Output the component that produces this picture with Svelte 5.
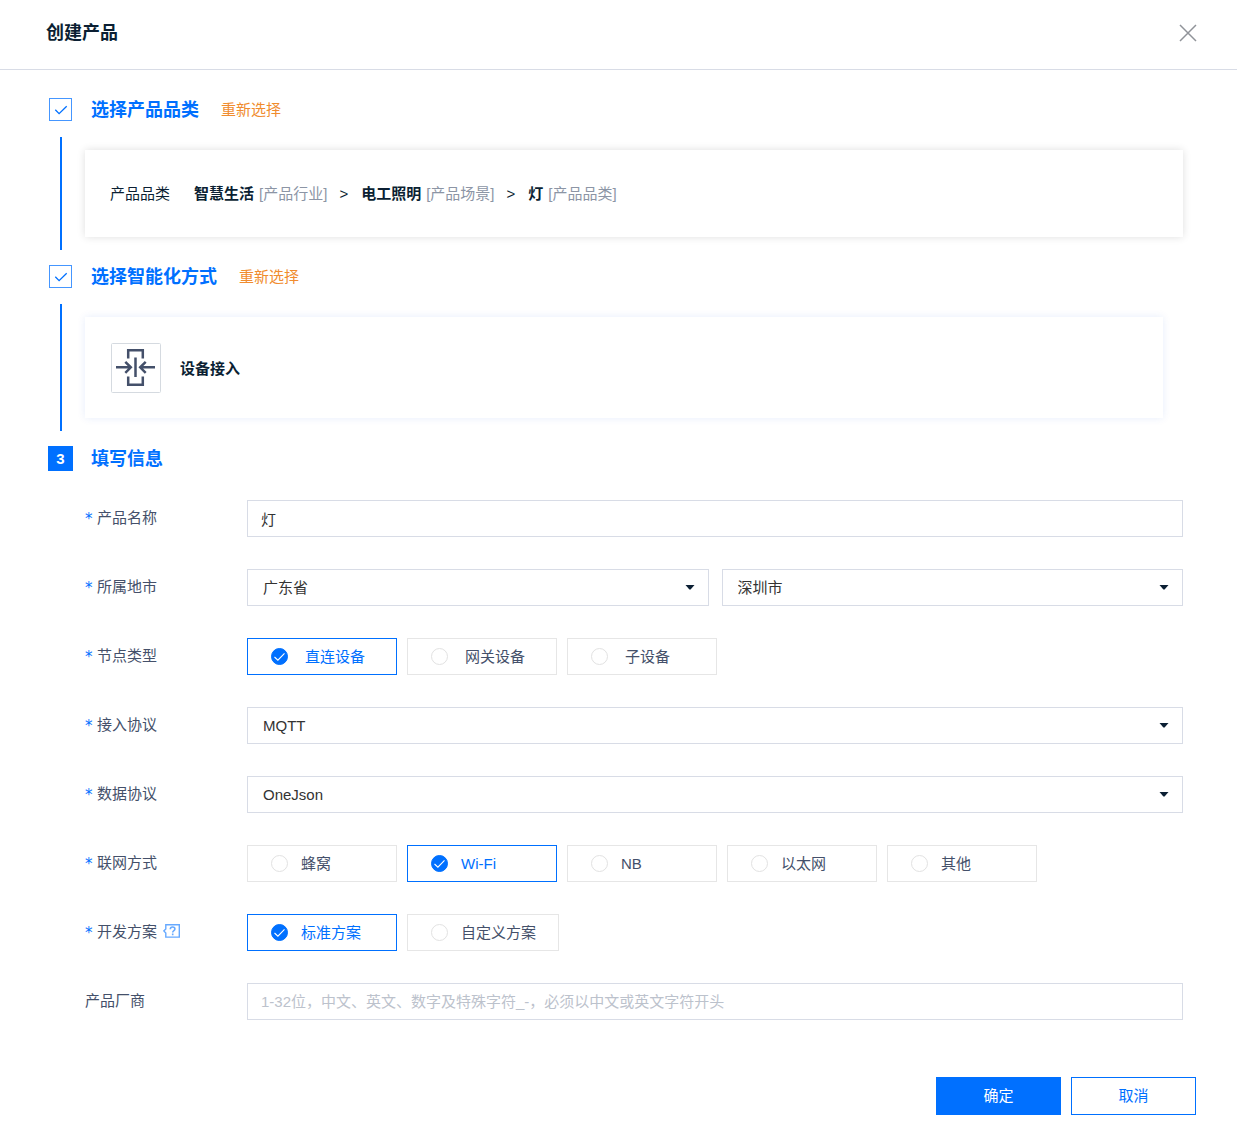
<script lang="ts">
  type Option = { value: string, label: string };

  let name = $state("灯");
  let province = $state("广东省");
  let city = $state("深圳市");
  let node = $state("direct");
  let access = $state("MQTT");
  let data = $state("OneJson");
  let network = $state("wifi");
  let plan = $state("standard");
  let vendor = $state("");

  const category = [
    { name: "智慧生活", kind: "[产品行业]" },
    { name: "电工照明", kind: "[产品场景]" },
    { name: "灯", kind: "[产品品类]" }
  ];

  const nodes: Option[] = [
    { value: "direct", label: "直连设备" },
    { value: "gateway", label: "网关设备" },
    { value: "sub", label: "子设备" }
  ];

  const networks: Option[] = [
    { value: "cellular", label: "蜂窝" },
    { value: "wifi", label: "Wi-Fi" },
    { value: "nb", label: "NB" },
    { value: "ethernet", label: "以太网" },
    { value: "other", label: "其他" }
  ];

  const plans: Option[] = [
    { value: "standard", label: "标准方案" },
    { value: "custom", label: "自定义方案" }
  ];
</script>

{#snippet caret()}
  <svg class="caret" viewBox="0 0 10 5" width="10" height="5" aria-hidden="true">
    <path d="M0.5 0h9L5.6 4.6h-1.2z" fill="#0b1f33" />
  </svg>
{/snippet}

{#snippet stepCheck()}
  <span class="marker">
    <svg viewBox="0 0 14 12" width="14" height="12" aria-hidden="true">
      <path d="M1.3 5.8l3.8 3.9 7.6-7.4" fill="none" stroke="#0070ff" stroke-width="1.3" />
    </svg>
  </span>
{/snippet}

{#snippet tick()}
  <svg class="tick" viewBox="0 0 17 17" width="17" height="17" aria-hidden="true">
    <path d="M3.5 9l3.4 3.2 6.6-6.8" fill="none" stroke="#fff" stroke-width="1.1" />
  </svg>
{/snippet}

<div class="dialog" role="dialog" aria-labelledby="title">
  <header>
    <h1 id="title">创建产品</h1>
    <button class="close" type="button" aria-label="关闭">
      <svg viewBox="0 0 18 18" width="18" height="18" aria-hidden="true">
        <path d="M1 1l16 16M17 1L1 17" fill="none" stroke="#909399" stroke-width="1.5" />
      </svg>
    </button>
  </header>

  <form onsubmit={(e) => e.preventDefault()}>
    <section class="step">
      <div class="rail">
        {@render stepCheck()}
        <span class="line"></span>
      </div>
      <div class="body">
        <div class="heading">
          <h2>选择产品品类</h2>
          <a href="#category">重新选择</a>
        </div>
        <div class="card category">
          <span class="category_label">产品品类</span>
          {#each category as item, i}
            {#if i > 0}<span class="separator">&gt;</span>{/if}
            <span class="crumb"><b>{item.name}</b><span class="kind">{item.kind}</span></span>
          {/each}
        </div>
      </div>
    </section>

    <section class="step">
      <div class="rail">
        {@render stepCheck()}
        <span class="line"></span>
      </div>
      <div class="body">
        <div class="heading">
          <h2>选择智能化方式</h2>
          <a href="#mode">重新选择</a>
        </div>
        <div class="card mode">
          <svg viewBox="0 0 50 50" width="50" height="50" aria-hidden="true">
            <rect x="0.5" y="0.5" width="49" height="49" rx="1" fill="#fff" stroke="#d5dae0" />
            <g fill="none" stroke="#44506a" stroke-width="2.5">
              <path d="M17.2 15.5V7.3h14.6v8.2M17.2 33.5v8.2h14.6v-8.2M24.5 14.5v19.5" />
              <path d="M5 24.3h14M14.3 18.8l5.5 5.5-5.5 5.5M44 24.3H30M34.7 18.8l-5.5 5.5 5.5 5.5" />
            </g>
          </svg>
          <b>设备接入</b>
        </div>
      </div>
    </section>

    <section class="step">
      <div class="rail">
        <span class="marker current">3</span>
      </div>
      <div class="body">
        <div class="heading last">
          <h2>填写信息</h2>
        </div>

        <div class="fields">
          <div class="row">
            <label class="label" for="name"><i>*</i>产品名称</label>
            <input class="text" id="name" type="text" bind:value={name} />
          </div>

          <div class="row">
            <label class="label" for="province"><i>*</i>所属地市</label>
            <div class="pair">
              <div class="select">
                <select id="province" bind:value={province}>
                  <option>广东省</option>
                </select>
                {@render caret()}
              </div>
              <div class="select">
                <select aria-label="城市" bind:value={city}>
                  <option>深圳市</option>
                </select>
                {@render caret()}
              </div>
            </div>
          </div>

          <div class="row" role="radiogroup" aria-labelledby="node_label">
            <span class="label" id="node_label"><i>*</i>节点类型</span>
            <div class="options wide">
              {#each nodes as option}
                <label class="option" class:active={node === option.value}>
                  <span class="radio">
                    <input type="radio" name="node" value={option.value} bind:group={node} />
                    {#if node === option.value}{@render tick()}{/if}
                  </span>
                  <span>{option.label}</span>
                </label>
              {/each}
            </div>
          </div>

          <div class="row">
            <label class="label" for="access"><i>*</i>接入协议</label>
            <div class="select">
              <select id="access" bind:value={access}>
                <option>MQTT</option>
              </select>
              {@render caret()}
            </div>
          </div>

          <div class="row">
            <label class="label" for="data"><i>*</i>数据协议</label>
            <div class="select">
              <select id="data" bind:value={data}>
                <option>OneJson</option>
              </select>
              {@render caret()}
            </div>
          </div>

          <div class="row" role="radiogroup" aria-labelledby="network_label">
            <span class="label" id="network_label"><i>*</i>联网方式</span>
            <div class="options">
              {#each networks as option}
                <label class="option" class:active={network === option.value}>
                  <span class="radio">
                    <input type="radio" name="network" value={option.value} bind:group={network} />
                    {#if network === option.value}{@render tick()}{/if}
                  </span>
                  <span>{option.label}</span>
                </label>
              {/each}
            </div>
          </div>

          <div class="row" role="radiogroup" aria-labelledby="plan_label">
            <span class="label" id="plan_label">
              <i>*</i>开发方案
              <svg class="help" viewBox="0 0 17 14" width="17" height="14" aria-hidden="true">
                <path d="M2.8 0.7h13.5v12.4H2.8V9L0.8 6.9l2-2z" fill="none" stroke="#66a9ff" stroke-width="1.4" />
                <path d="M7.3 5.2c0-3 4.6-2.8 4.6-0.2 0 1.7-2.2 1.5-2.2 3.4M9.7 9.5v1.7" fill="none" stroke="#66a9ff" stroke-width="1.6" />
              </svg>
            </span>
            <div class="options">
              {#each plans as option}
                <label class="option" class:active={plan === option.value}>
                  <span class="radio">
                    <input type="radio" name="plan" value={option.value} bind:group={plan} />
                    {#if plan === option.value}{@render tick()}{/if}
                  </span>
                  <span>{option.label}</span>
                </label>
              {/each}
            </div>
          </div>

          <div class="row">
            <label class="label" for="vendor">产品厂商</label>
            <input
              class="text"
              id="vendor"
              type="text"
              placeholder="1-32位，中文、英文、数字及特殊字符_-，必须以中文或英文字符开头"
              bind:value={vendor}
            />
          </div>
        </div>
      </div>
    </section>

    <footer>
      <button class="action primary" type="submit">确定</button>
      <button class="action" type="button">取消</button>
    </footer>
  </form>
</div>

<style>
:global(body) {
  background: #fff;
}

.dialog, .dialog * {
  box-sizing: border-box;
}

.dialog {
  font-family: "Liberation Sans", "Noto Sans CJK SC", sans-serif;
  font-size: 15px;
  line-height: 23px;
  color: #0b1f33;
}

.dialog input, .dialog select, .dialog button {
  font-family: inherit;
  font-size: 15px;
  margin: 0;
}

header {
  display: flex;
  align-items: center;
  justify-content: space-between;
  padding: 21px 40px 24px 46px;
  border-bottom: 1px solid #d8dce6;
}

h1, h2 {
  margin: 0;
  font-size: 18px;
  line-height: 24px;
  font-weight: 700;
}

.close {
  display: flex;
  padding: 0;
  border: 0;
  background: none;
  cursor: pointer;
}

form {
  padding: 28px 0 13px;
}

.step {
  display: flex;
  margin: 0 54px 15px 48px;
}

.rail {
  display: flex;
  flex-direction: column;
  align-items: center;
  flex: none;
  width: 25px;
}

.marker {
  display: flex;
  align-items: center;
  justify-content: center;
  width: 23px;
  height: 23px;
  border: 1px solid #4596ff;
}

.marker.current {
  width: 25px;
  height: 25px;
  border: 0;
  background: #0070ff;
  color: #fff;
  font-weight: 700;
}

.line {
  flex: 1;
  width: 2px;
  margin-top: 16px;
  background: #0070ff;
}

.body {
  flex: 1;
  min-width: 0;
  padding: 0 0 13px 12px;
}

.heading {
  display: flex;
  align-items: center;
  gap: 22px;
  height: 23px;
  margin-bottom: 29px;
  padding-left: 6px;
}

.heading.last {
  height: 25px;
}

h2 {
  color: #0070ff;
}

.heading a {
  color: #f08c2e;
  text-decoration: none;
}

.card {
  display: flex;
  align-items: center;
  background: #fff;
}

.category {
  padding: 32px 25px;
  box-shadow: 0 0 8px rgba(0, 0, 0, 0.13);
}

.category_label {
  margin-right: 24px;
}

.crumb {
  display: flex;
  gap: 5px;
}

.kind {
  color: #8c95a5;
}

.separator {
  margin: 0 13px 0 12px;
}

.mode {
  gap: 19px;
  margin-right: 20px;
  padding: 26px 26px 25px;
  box-shadow: 0 0 8px rgba(0, 80, 220, 0.1);
}

.fields {
  display: flex;
  flex-direction: column;
  gap: 32px;
}

.row {
  display: flex;
  align-items: center;
}

.row > .text, .row > .select, .pair {
  flex: 1;
  min-width: 0;
}

.label {
  display: flex;
  align-items: center;
  flex: none;
  width: 162px;
  padding-bottom: 3px;
  color: #44506a;
}

.label i {
  width: 12px;
  padding-top: 4px;
  color: #0070ff;
  font-family: "DejaVu Sans", sans-serif;
  font-size: 15px;
  font-style: normal;
}

.help {
  margin-left: 6px;
}

.text, select {
  display: block;
  width: 100%;
  height: 37px;
  border: 1px solid #d8dce6;
  border-radius: 0;
  background: #fff;
  color: #333;
  outline: none;
}

.text {
  padding: 0 13px;
}

.text::placeholder {
  color: #bcc2cc;
}

.pair {
  display: flex;
  gap: 13px;
}

.select {
  position: relative;
  flex: 1;
}

select {
  appearance: none;
  padding: 0 32px 0 15px;
}

.caret {
  position: absolute;
  top: 16px;
  right: 14px;
  pointer-events: none;
}

.options {
  display: flex;
  gap: 10px;
}

.option {
  display: flex;
  align-items: center;
  gap: 13px;
  min-width: 150px;
  height: 37px;
  padding: 0 22px 0 23px;
  border: 1px solid #e6e6e6;
  color: #44506a;
  cursor: pointer;
}

.wide .option {
  gap: 17px;
}

.option.active {
  border-color: #0070ff;
  color: #0070ff;
}

.radio {
  display: grid;
}

.radio input {
  grid-area: 1 / 1;
  appearance: none;
  width: 17px;
  height: 17px;
  border: 1px solid #e2e2e2;
  border-radius: 50%;
}

.radio input:checked {
  border-color: #0070ff;
  background: #0070ff;
}

.tick {
  grid-area: 1 / 1;
  pointer-events: none;
}

footer {
  display: flex;
  justify-content: flex-end;
  gap: 10px;
  margin-top: 44px;
  padding-right: 41px;
}

.action {
  width: 125px;
  height: 38px;
  padding: 0 0 3px;
  border: 1px solid #0070ff;
  background: #fff;
  color: #0070ff;
  cursor: pointer;
}

.action.primary {
  background: #0070ff;
  color: #fff;
}
</style>
